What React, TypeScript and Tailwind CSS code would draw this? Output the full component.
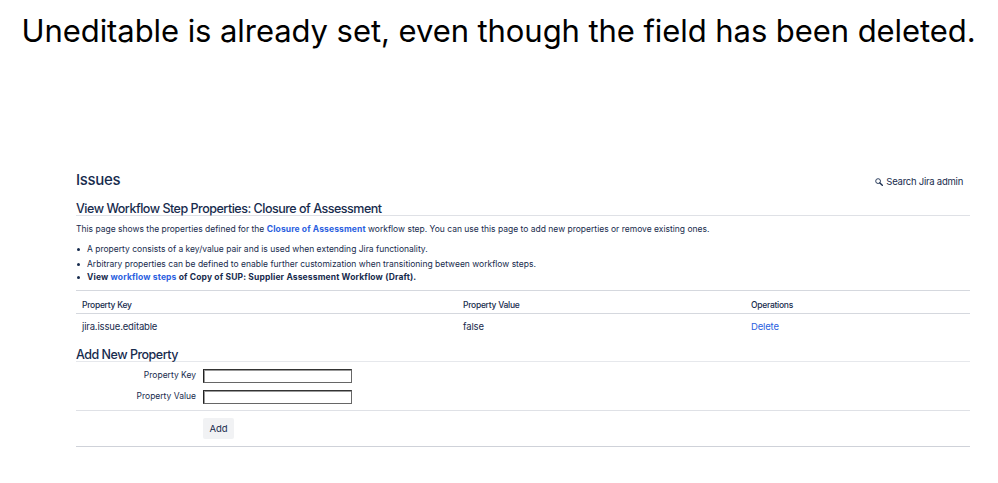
import React from "react";

const HEAD = "whitespace-nowrap text-[12.5px] font-medium leading-[18px] tracking-[-0.49px]";

function Field({ label }: { label: string }) {
  return (
    <label className="flex h-[21px] items-start">
      <span className="w-[120px] text-right text-[8.5px] leading-[13px]">{label}</span>
      <span className="ml-[7px] block h-[14px] w-[149px] border border-t-[#333] border-r-[#666] border-b-[#666] border-l-[#222]">
        <input className="block h-[12px] w-full border-t border-l border-[#999] bg-white px-1 text-[8.5px] outline-none" />
      </span>
    </label>
  );
}

function Bullet({ children, bold }: { children: React.ReactNode; bold?: boolean }) {
  return (
    <li className="flex items-center whitespace-nowrap">
      <span className="ml-[1px] mr-[7px] size-[3px] rounded-full bg-[#172b4d]" />
      <span className={bold ? "font-bold tracking-[0.15px]" : ""}>{children}</span>
    </li>
  );
}

export default function App() {
  return (
    <div className="h-[483px] w-[998px] overflow-hidden bg-white font-['Inter','Liberation_Sans',sans-serif] text-[#172b4d]">
      <div className="h-[167px] pl-[21.5px] pt-[10px]">
        <h1 className="whitespace-nowrap font-['Inter',sans-serif] text-[31px] leading-[42px] tracking-[-0.07px] text-black">Uneditable is already set, even though the field has been deleted.</h1>
      </div>
      <div className="ml-[76px] w-[894px]">
        <header className="flex h-[30px] items-start justify-between pr-[7px]">
          <h2 className="text-[15px] font-medium leading-[26px] tracking-[-0.3px]">Issues</h2>
          <div className="flex items-center gap-[3px] pt-[2px] text-[9.5px] leading-[26px] tracking-[-0.25px]">
            <svg width="8" height="8" viewBox="0 0 8 8" fill="none" stroke="currentColor" className="-mt-px">
              <circle cx="3.1" cy="3.1" r="2.4" strokeWidth="0.9" />
              <path d="M4.9 4.9 7.3 7.3" strokeWidth="1.4" strokeLinecap="round" />
            </svg>
            <span>Search Jira admin</span>
          </div>
        </header>
        <h3 className={"h-[19px] border-b border-[#dfe1e6] pt-[3px] " + HEAD}>View Workflow Step Properties: Closure of Assessment</h3>
        <p className="mt-[6px] whitespace-nowrap text-[8.5px] leading-[14px]">
          This page shows the properties defined for the <b className="font-bold tracking-[0.12px] text-[#2b5fe0]">Closure of Assessment</b> workflow step. You can use this page to add new properties or remove existing ones.
        </p>
        <ul className="mt-[6px] h-[48px] text-[8.5px] leading-[14px]">
          <Bullet>A property consists of a key/value pair and is used when extending Jira functionality.</Bullet>
          <li className="h-px" />
          <Bullet>Arbitrary properties can be defined to enable further customization when transitioning between workflow steps.</Bullet>
          <li className="-mt-px list-none">
            <ul>
              <Bullet bold>View <a className="text-[#2b5fe0]">workflow steps</a> of Copy of SUP: Supplier Assessment Workflow (Draft).</Bullet>
            </ul>
          </li>
        </ul>
        <table className="w-full table-fixed border-collapse border-t border-[#d5d8de] text-left">
          <colgroup><col className="w-[381px]" /><col className="w-[288px]" /><col /></colgroup>
          <thead>
            <tr className="h-[23px] border-b border-[#d5d8de] text-[8.5px] leading-[12px] tracking-[-0.27px]">
              <th className="pl-[6px] pt-[5px] font-medium">Property Key</th>
              <th className="pl-[6px] pt-[5px] font-medium">Property Value</th>
              <th className="pl-[6px] pt-[5px] font-medium">Operations</th>
            </tr>
          </thead>
          <tbody>
            <tr className="h-[27px] text-[9.5px] leading-[14px] tracking-[-0.16px]">
              <td className="pl-[6px]">jira.issue.editable</td>
              <td className="pl-[6px]">false</td>
              <td className="pl-[6px] text-[#2b5fe0]">Delete</td>
            </tr>
          </tbody>
        </table>
        <h3 className={"mt-[2px] h-[19px] border-b border-[#e6e8ec] pt-[3px] " + HEAD}>Add New Property</h3>
        <form className="pt-[7px]">
          <Field label="Property Key" />
          <Field label="Property Value" />
          <div className="-mt-px h-[37px] border-t border-b border-t-[#dfe1e6] border-b-[#cfd2d9] pt-[7px]">
            <button type="button" className="ml-[127px] block h-[21px] w-[31px] rounded-[2px] bg-[#f1f2f4] text-[9.5px] leading-[21px] tracking-[-0.1px]">Add</button>
          </div>
        </form>
      </div>
    </div>
  );
}
